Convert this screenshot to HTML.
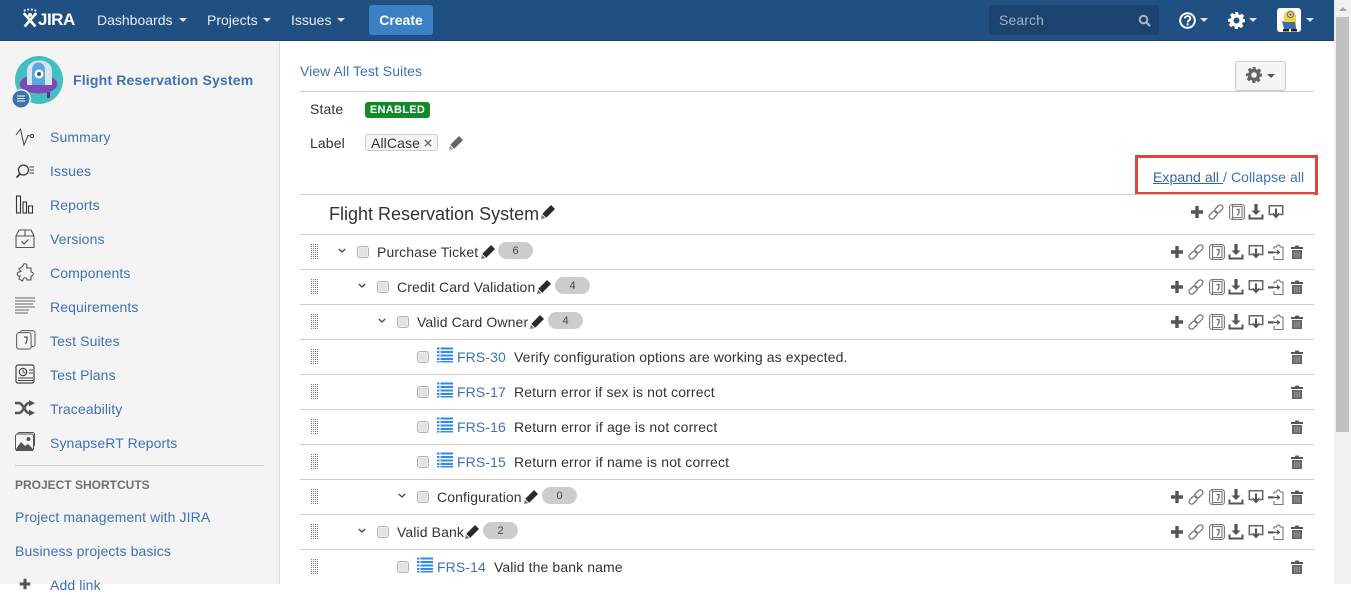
<!DOCTYPE html>
<html>
<head>
<meta charset="utf-8">
<style>
html,body{margin:0;padding:0;width:1351px;height:584px;overflow:hidden;background:#fff;font-family:"Liberation Sans",Arial,sans-serif;font-size:14px;color:#333;letter-spacing:.11px}
.a{position:absolute;white-space:nowrap;line-height:20px}
svg{position:absolute;overflow:visible}
.lnk{color:#3f72b2}
.nv{color:#e6edf5;letter-spacing:0}
.caret{position:absolute;width:0;height:0;border-left:4px solid transparent;border-right:4px solid transparent;border-top:4px solid #dbe4ee}
.hr{position:absolute;left:300px;width:1014px;height:1px;background:#ccc}
.drag{position:absolute;left:311px;width:7px;height:15px;background:repeating-linear-gradient(90deg,transparent 0 1px,#fff 1px 2px),repeating-linear-gradient(0deg,#777 0 1px,#fff 1px 2px)}
.cb{position:absolute;width:10px;height:10px;border:1px solid #b0b0b0;border-radius:3px;background:#e2e2e2;box-shadow:inset 0 0 0 1px #eee}
.bdg{position:absolute;width:35px;height:17px;border-radius:9px;background:#ccc;font-size:11px;line-height:19px;text-align:center;color:#444;letter-spacing:0}
.sb{color:#3f72b2}
</style>
</head>
<body>
<svg width="0" height="0" style="position:absolute">
<defs>
<symbol id="plus" viewBox="0 0 16 16"><path d="M6.300 2h3.400v4.300h4.300v3.400H9.700V14H6.300V9.700H2V6.300h4.300z" fill="#555"/></symbol>
<symbol id="link" viewBox="0 0 16 16"><g fill="none" stroke="#777" stroke-width="1.300"><rect x="8.200" y=".2" width="5.200" height="9.500" rx="2.600" transform="rotate(45 10.800 5)"/><rect x="2.600" y="6.300" width="5.200" height="9.500" rx="2.600" transform="rotate(45 5.200 11)"/></g></symbol>
<symbol id="suite" viewBox="0 0 16 16"><g fill="none" stroke="#777" stroke-width="1.100"><rect x=".6" y=".6" width="14.800" height="14.800" rx="2.500"/><path d="M3.500 1v14M3.500 2.500h9.500v11H3.500"/><path d="M7.500 5.500h2.500v3l-1.500 3" stroke="#666" stroke-width="1.300"/></g></symbol>
<symbol id="dl" viewBox="0 0 16 16"><path d="M6.400 0h3.200v6.500h3L8 11 3.400 6.500h3z" fill="#555"/><path d="M.5 10.500v5h15v-5h-2v3H2.500v-3z" fill="#555"/></symbol>
<symbol id="inb" viewBox="0 0 16 16"><path d="M4.500 10.500H1.300V1.800h13.400v8.700h-3.200" fill="none" stroke="#666" stroke-width="1.500"/><path d="M8 4.500v8.500M4.800 9.500L8 13l3.200-3.500" fill="none" stroke="#555" stroke-width="2"/></symbol>
<symbol id="ex" viewBox="0 0 16 16"><path d="M6 5V3h2.500l.7-1.800h2.400l.7 1.800h2.700v12.500H6v-3.500" fill="none" stroke="#777" stroke-width="1.100"/><path d="M0 7.300h5.500v2.200H0z" fill="#555"/><path d="M5.500 8.400H11M9 6.400l2.500 2-2.500 2" fill="none" stroke="#555" stroke-width="1.200"/></symbol>
<symbol id="trash" viewBox="0 0 16 16"><path d="M2 3h3.800l.7-1.500h3l.7 1.500H14v2H2z" fill="#555"/><path d="M3 6h10v9H3z" fill="#666"/><path d="M5.800 7.500v6M8 7.500v6M10.200 7.500v6" stroke="#aaa" stroke-width=".9"/></symbol>
<symbol id="pen" viewBox="0 0 16 16"><path d="M11.500 0L16 4.500 6 14.500 1.500 10z" fill="#2a2a2a"/><path d="M1 11l4 4-5 1z" fill="#777"/></symbol>
<symbol id="list" viewBox="0 0 16 16"><path d="M0 .5h2.500v2H0zM3.500.5H16v2H3.500zM0 4h2.500v2H0zM3.500 4H16v2H3.500zM0 7.500h2.500v2H0zM3.500 7.500H16v2H3.500zM0 11h2.500v2H0zM3.500 11H16v2H3.500zM0 14h2.500v1.500H0zM3.500 14H16v1.500H3.500z" fill="#2d8ceb"/></symbol>
<symbol id="chev" viewBox="0 0 8 6"><path d="M.8 1l3.200 3 3.200-3" fill="none" stroke="#444" stroke-width="1.300"/></symbol>
<symbol id="gear" viewBox="0 0 16 16"><path fill-rule="evenodd" d="M6.500 0h3l.4 2.200 1.300.6L13.100 1.500l2.100 2.100-1.300 1.900.6 1.300L16 6.500v3l-2.200.4-.6 1.300 1.300 1.900-2.100 2.100-1.900-1.300-1.300.6L9.500 16h-3l-.4-2.500-1.300-.6-1.900 1.300-2.100-2.100 1.300-1.900-.6-1.300L0 9.500v-3l2.500-.4.600-1.300L1.800 2.900 3.900.8l1.900 1.300 1.300-.6zM8 5.200a2.800 2.800 0 1 0 0 5.600 2.800 2.800 0 0 0 0-5.600z"/></symbol>
</defs>
</svg>

<!-- header -->
<div class="a" style="left:0;top:0;width:1334px;height:40px;background:#205081;border-bottom:1px solid #1a4069"></div>
<svg style="left:22px;top:8px" width="16" height="21" viewBox="0 0 18 22"><g fill="#fff"><circle cx="9" cy="7" r="2.200"/><circle cx="3" cy="2" r="1.200"/><circle cx="7" cy="1" r="1.200"/><circle cx="11" cy="1" r="1.200"/><circle cx="15" cy="2" r="1.200"/></g><path d="M2 5l7 8 7-8M9 13l-6 7M9 13l6 7" fill="none" stroke="#fff" stroke-width="3"/></svg>
<div class="a" style="left:38px;top:10px;color:#fff;font-weight:bold;font-size:17px;letter-spacing:-.5px">JIRA</div>
<div class="a nv" style="left:97px;top:10px">Dashboards</div><div class="caret" style="left:179px;top:18px"></div>
<div class="a nv" style="left:207px;top:10px">Projects</div><div class="caret" style="left:263px;top:18px"></div>
<div class="a nv" style="left:291px;top:10px">Issues</div><div class="caret" style="left:337px;top:18px"></div>
<div class="a" style="left:369px;top:5px;width:64px;height:30px;background:#3b7fc4;border-radius:3px;color:#fff;font-weight:bold;text-align:center;line-height:30px;letter-spacing:0">Create</div>
<div class="a" style="left:989px;top:5px;width:170px;height:30px;background:#1c4270;border-radius:3px"></div>
<div class="a" style="left:999px;top:10px;color:#9fb2c8">Search</div>
<svg style="left:1138px;top:14px" width="13" height="13" viewBox="0 0 13 13"><circle cx="5.500" cy="5.500" r="3.800" fill="none" stroke="#a7b6c7" stroke-width="2"/><path d="M8.500 8.500l3.500 3.500" stroke="#a7b6c7" stroke-width="2.200"/></svg>
<svg style="left:1179px;top:12px" width="17" height="17" viewBox="0 0 17 17"><circle cx="8.500" cy="8.500" r="7.300" fill="none" stroke="#fff" stroke-width="2"/><path d="M5.800 6.500c.2-3.300 5.600-3.200 5.500-.1 0 2-2.500 2-2.700 4" fill="none" stroke="#fff" stroke-width="1.900"/><rect x="7.600" y="11.300" width="2" height="2" fill="#fff"/></svg>
<div class="caret" style="left:1200px;top:18px"></div>
<svg style="left:1228px;top:12px;fill:#fff" width="17" height="17"><use href="#gear"/></svg>
<div class="caret" style="left:1249px;top:18px"></div>
<svg style="left:1277px;top:8px" width="24" height="24" viewBox="0 0 24 24"><rect width="24" height="24" rx="3" fill="#fff"/><path d="M7 9c0-9 12-9 12 0v11H7z" fill="#f3d33c"/><circle cx="13.500" cy="6.500" r="3" fill="#ddd" stroke="#666"/><circle cx="13.500" cy="6.500" r="1" fill="#432"/><path d="M5 13l3 1h10l1 7H7z" fill="#3d6ca6"/><path d="M6 21h6v2.500H6zM14 21h6v2.500h-6z" fill="#222"/></svg>
<div class="caret" style="left:1306px;top:18px"></div>

<!-- scrollbar -->
<div class="a" style="left:1334px;top:0;width:17px;height:584px;background:#f1f1f1"></div>
<div class="a" style="left:1336px;top:17px;width:13px;height:415px;background:#c1c1c1"></div>
<div class="a" style="left:1339px;top:7px;width:0;height:0;border-left:4px solid transparent;border-right:4px solid transparent;border-bottom:4px solid #a3a3a3"></div>

<!-- sidebar -->
<div class="a" style="left:0;top:41px;width:279px;height:543px;background:#f4f4f4;border-right:1px solid #ddd"></div>
<svg style="left:12px;top:55px" width="54" height="60" viewBox="0 0 54 60"><circle cx="27" cy="25" r="24" fill="#43bfbf"/><ellipse cx="26.500" cy="29" rx="19" ry="9.500" fill="#7d4bb5"/><path d="M15 30V16C15 2 40 2 40 16V30z" fill="#d8e4f2"/><path d="M20 30V15C20 5 33 5 33 15V30z" fill="#5aa8e0"/><circle cx="27" cy="19" r="4.500" fill="#fff"/><circle cx="27" cy="19" r="2" fill="#2e5c8c"/><path d="M35 37h3v6h-3z" fill="#5d3590"/><circle cx="9" cy="44" r="10" fill="#f4f4f4"/><circle cx="9" cy="44" r="8.500" fill="#3b73af"/><path d="M5 41h8M5 43.500h8M5 46h8" stroke="#fff" stroke-width="1.100"/></svg>
<div class="a" style="left:73px;top:70px;font-weight:bold;color:#3f72b2;letter-spacing:.18px">Flight Reservation System</div>

<div class="a sb" style="left:50px;top:127px">Summary</div>
<div class="a sb" style="left:50px;top:161px">Issues</div>
<div class="a sb" style="left:50px;top:195px">Reports</div>
<div class="a sb" style="left:50px;top:229px">Versions</div>
<div class="a sb" style="left:50px;top:263px">Components</div>
<div class="a sb" style="left:50px;top:297px">Requirements</div>
<div class="a sb" style="left:50px;top:331px">Test Suites</div>
<div class="a sb" style="left:50px;top:365px">Test Plans</div>
<div class="a sb" style="left:50px;top:399px">Traceability</div>
<div class="a sb" style="left:50px;top:433px">SynapseRT Reports</div>

<svg style="left:15px;top:127px" width="20" height="20" viewBox="0 0 20 20"><path d="M1 8L5.500 2 9 18l4-9.500 2 .5" fill="none" stroke="#444" stroke-width="1"/><circle cx="17" cy="9" r="1.500" fill="none" stroke="#444"/></svg>
<svg style="left:15px;top:161px" width="20" height="20" viewBox="0 0 20 20"><circle cx="8.500" cy="9" r="5" fill="none" stroke="#333" stroke-width="1.200"/><path d="M5 13l-3.500 3.500" stroke="#333" stroke-width="1.600"/><path d="M14.500 6H19M14.500 9H19M14.500 12H19" stroke="#444"/></svg>
<svg style="left:15px;top:195px" width="20" height="20" viewBox="0 0 20 20"><g fill="none" stroke="#333" stroke-width="1.100"><rect x="1.500" y="1" width="4" height="17"/><rect x="8" y="7" width="3.500" height="11"/><rect x="13.500" y="11" width="4" height="7"/></g></svg>
<svg style="left:15px;top:229px" width="20" height="20" viewBox="0 0 20 20"><g fill="none" stroke="#555" stroke-width="1.100"><path d="M1 7l3-6h12l3 6v11.500H1zM1 7h18M10 1v6"/><path d="M6.500 12.500l2.500 2.500 4.500-4.500" stroke="#444"/></g></svg>
<svg style="left:15px;top:263px" width="20" height="20" viewBox="0 0 20 20"><path d="M8 3c0-3 4-3 4 0l-.5 2H16v4c3 0 3 4 0 4v4h-4c0-3-4-3-4 0l-.5 1-3.500-2 1-3c-3 1-4-3-1-4l2-.5L4 6z" fill="none" stroke="#555" stroke-width="1.100"/></svg>
<svg style="left:15px;top:297px" width="20" height="20" viewBox="0 0 20 20"><path d="M0 1h20M0 4h20M0 7h18M0 10h20M0 13h14M0 16h13" stroke="#666" stroke-width="1"/></svg>
<svg style="left:16px;top:330px" width="20" height="20" viewBox="0 0 20 20"><g fill="none" stroke="#666" stroke-width="1.100"><rect x="4" y=".6" width="15" height="16" rx="2.500"/><rect x=".6" y="2.600" width="14.500" height="16.500" rx="2.500" fill="#f4f4f4"/><path d="M8 7h3v3.500l-1.500 3.500" stroke="#555" stroke-width="1.300"/></g></svg>
<svg style="left:15px;top:364px" width="20" height="20" viewBox="0 0 20 20"><rect x="1" y="1" width="18" height="18" rx="2" fill="none" stroke="#444" stroke-width="1.200"/><circle cx="8" cy="8" r="3.700" fill="none" stroke="#444" stroke-width="1.200"/><path d="M8 5.500V8l2 1M14 6h4M14 9h4M3 14h15M3 16.500h15" fill="none" stroke="#444"/></svg>
<svg style="left:15px;top:400px" width="20" height="16" viewBox="0 0 20 16"><path d="M0 3h4c4 0 6 10 10 10M0 13h4c4 0 6-10 10-10" fill="none" stroke="#555" stroke-width="2.500"/><path d="M14 0l6 3-6 3.500zM14 9.500l6 3.500-6 3z" fill="#555"/></svg>
<svg style="left:15px;top:432px" width="20" height="20" viewBox="0 0 20 20"><rect x="2.500" y=".5" width="17" height="14" rx="2" fill="none" stroke="#555"/><rect x=".5" y="2" width="18" height="16.500" rx="2" fill="#f4f4f4" stroke="#555"/><path d="M1 17l5-7 4 4 3-2 5 5v2H1z" fill="#555"/><circle cx="13.500" cy="7" r="2" fill="#555"/></svg>

<div class="a" style="left:15px;top:465px;width:249px;height:1px;background:#ccc"></div>
<div class="a" style="left:15px;top:475px;font-size:12px;font-weight:bold;color:#707070;letter-spacing:0">PROJECT SHORTCUTS</div>
<div class="a sb" style="left:15px;top:507px">Project management with JIRA</div>
<div class="a sb" style="left:15px;top:541px">Business projects basics</div>
<svg style="left:18px;top:577px" width="14" height="14"><use href="#plus" width="14" height="14"/></svg>
<div class="a sb" style="left:50px;top:575px">Add link</div>

<!-- content -->
<div class="a lnk" style="left:300px;top:61px;letter-spacing:.06px">View All Test Suites</div>
<div class="a" style="left:1235px;top:61px;width:49px;height:28px;background:#f5f5f5;border:1px solid #ccc;border-radius:3px"></div>
<svg style="left:1246px;top:67px;fill:#666" width="16" height="16"><use href="#gear"/></svg>
<div class="caret" style="left:1267px;top:74px;border-top-color:#555"></div>
<div class="hr" style="top:91px;width:1014px"></div>
<div class="a" style="left:310px;top:99px">State</div>
<div class="a" style="left:365px;top:102px;width:65px;height:16px;background:#14892c;border-radius:3px;color:#fff;font-size:11px;font-weight:bold;line-height:16px;text-align:center;letter-spacing:.3px">ENABLED</div>
<div class="a" style="left:310px;top:133px">Label</div>
<div class="a" style="left:365px;top:134px;width:71px;height:15px;border:1px solid #ccc;border-radius:3px;background:#f5f5f5"></div>
<div class="a" style="left:371px;top:133px">AllCase</div>
<svg style="left:424px;top:139px" width="8" height="8" viewBox="0 0 9 9"><path d="M1 1l7 7M8 1L1 8" stroke="#666" stroke-width="1.500"/></svg>
<svg style="left:449px;top:136px;opacity:.72" width="14" height="14"><use href="#pen" width="14" height="14"/></svg>

<div class="a" style="left:1135px;top:155px;width:177px;height:34px;border:3px solid #e5413e"></div>
<div class="a" style="left:1153px;top:167px;color:#3f72b2;letter-spacing:.07px"><span style="text-decoration:underline;color:#2f66a8">Expand all </span>/ Collapse all</div>

<div class="hr" style="top:194px"></div>
<div class="a" style="left:329px;top:204px;font-size:18px;letter-spacing:0">Flight Reservation System</div>
<svg style="left:541px;top:205px" width="14" height="14"><use href="#pen" width="14" height="14"/></svg>
<svg style="left:1189px;top:204px" width="16" height="16"><use href="#plus"/></svg>
<svg style="left:1208px;top:204px" width="16" height="16"><use href="#link"/></svg>
<svg style="left:1229px;top:204px" width="16" height="16"><use href="#suite"/></svg>
<svg style="left:1248px;top:204px" width="16" height="16"><use href="#dl"/></svg>
<svg style="left:1268px;top:204px" width="16" height="16"><use href="#inb"/></svg>
<div class="hr" style="top:234px"></div>

<!-- row lines -->
<div class="hr" style="top:269px"></div>
<div class="hr" style="top:304px"></div>
<div class="hr" style="top:339px"></div>
<div class="hr" style="top:374px"></div>
<div class="hr" style="top:409px"></div>
<div class="hr" style="top:444px"></div>
<div class="hr" style="top:479px"></div>
<div class="hr" style="top:514px"></div>
<div class="hr" style="top:549px"></div>

<!-- drag handles -->
<div class="drag" style="top:244px"></div>
<div class="drag" style="top:279px"></div>
<div class="drag" style="top:314px"></div>
<div class="drag" style="top:349px"></div>
<div class="drag" style="top:384px"></div>
<div class="drag" style="top:419px"></div>
<div class="drag" style="top:454px"></div>
<div class="drag" style="top:489px"></div>
<div class="drag" style="top:524px"></div>
<div class="drag" style="top:559px"></div>

<!-- row 1 -->
<svg style="left:338px;top:248px" width="8" height="6"><use href="#chev"/></svg>
<div class="cb" style="left:357px;top:246px"></div>
<div class="a" style="left:377px;top:242px">Purchase Ticket</div>
<svg style="left:481px;top:245px" width="14" height="14"><use href="#pen" width="14" height="14"/></svg>
<div class="bdg" style="left:498px;top:242px">6</div>
<!-- row 2 -->
<svg style="left:358px;top:283px" width="8" height="6"><use href="#chev"/></svg>
<div class="cb" style="left:377px;top:281px"></div>
<div class="a" style="left:397px;top:277px">Credit Card Validation</div>
<svg style="left:537px;top:280px" width="14" height="14"><use href="#pen" width="14" height="14"/></svg>
<div class="bdg" style="left:555px;top:277px">4</div>
<!-- row 3 -->
<svg style="left:378px;top:318px" width="8" height="6"><use href="#chev"/></svg>
<div class="cb" style="left:397px;top:316px"></div>
<div class="a" style="left:417px;top:312px">Valid Card Owner</div>
<svg style="left:530px;top:315px" width="14" height="14"><use href="#pen" width="14" height="14"/></svg>
<div class="bdg" style="left:548px;top:312px">4</div>
<!-- FRS rows -->
<div class="cb" style="left:417px;top:351px"></div>
<svg style="left:437px;top:347px" width="16" height="16"><use href="#list"/></svg>
<div class="a lnk" style="left:457px;top:347px">FRS-30</div>
<div class="a" style="left:514px;top:347px">Verify configuration options are working as expected.</div>
<div class="cb" style="left:417px;top:386px"></div>
<svg style="left:437px;top:382px" width="16" height="16"><use href="#list"/></svg>
<div class="a lnk" style="left:457px;top:382px">FRS-17</div>
<div class="a" style="left:514px;top:382px;letter-spacing:.14px">Return error if sex is not correct</div>
<div class="cb" style="left:417px;top:421px"></div>
<svg style="left:437px;top:417px" width="16" height="16"><use href="#list"/></svg>
<div class="a lnk" style="left:457px;top:417px">FRS-16</div>
<div class="a" style="left:514px;top:417px;letter-spacing:.17px">Return error if age is not correct</div>
<div class="cb" style="left:417px;top:456px"></div>
<svg style="left:437px;top:452px" width="16" height="16"><use href="#list"/></svg>
<div class="a lnk" style="left:457px;top:452px">FRS-15</div>
<div class="a" style="left:514px;top:452px;letter-spacing:.17px">Return error if name is not correct</div>
<!-- Configuration -->
<svg style="left:398px;top:493px" width="8" height="6"><use href="#chev"/></svg>
<div class="cb" style="left:417px;top:491px"></div>
<div class="a" style="left:437px;top:487px">Configuration</div>
<svg style="left:524px;top:490px" width="14" height="14"><use href="#pen" width="14" height="14"/></svg>
<div class="bdg" style="left:542px;top:487px">0</div>
<!-- Valid Bank -->
<svg style="left:358px;top:528px" width="8" height="6"><use href="#chev"/></svg>
<div class="cb" style="left:377px;top:526px"></div>
<div class="a" style="left:397px;top:522px">Valid Bank</div>
<svg style="left:465px;top:525px" width="14" height="14"><use href="#pen" width="14" height="14"/></svg>
<div class="bdg" style="left:483px;top:522px">2</div>
<!-- FRS-14 -->
<div class="cb" style="left:397px;top:561px"></div>
<svg style="left:417px;top:557px" width="16" height="16"><use href="#list"/></svg>
<div class="a lnk" style="left:437px;top:557px">FRS-14</div>
<div class="a" style="left:494px;top:557px">Valid the bank name</div>

<!-- action icons rows -->
<svg style="left:1169px;top:244px" width="16" height="16"><use href="#plus"/></svg>
<svg style="left:1188px;top:244px" width="16" height="16"><use href="#link"/></svg>
<svg style="left:1209px;top:244px" width="16" height="16"><use href="#suite"/></svg>
<svg style="left:1228px;top:244px" width="16" height="16"><use href="#dl"/></svg>
<svg style="left:1248px;top:244px" width="16" height="16"><use href="#inb"/></svg>
<svg style="left:1268px;top:244px" width="16" height="16"><use href="#ex"/></svg>
<svg style="left:1289px;top:244px" width="16" height="16"><use href="#trash"/></svg>

<svg style="left:1169px;top:279px" width="16" height="16"><use href="#plus"/></svg>
<svg style="left:1188px;top:279px" width="16" height="16"><use href="#link"/></svg>
<svg style="left:1209px;top:279px" width="16" height="16"><use href="#suite"/></svg>
<svg style="left:1228px;top:279px" width="16" height="16"><use href="#dl"/></svg>
<svg style="left:1248px;top:279px" width="16" height="16"><use href="#inb"/></svg>
<svg style="left:1268px;top:279px" width="16" height="16"><use href="#ex"/></svg>
<svg style="left:1289px;top:279px" width="16" height="16"><use href="#trash"/></svg>

<svg style="left:1169px;top:314px" width="16" height="16"><use href="#plus"/></svg>
<svg style="left:1188px;top:314px" width="16" height="16"><use href="#link"/></svg>
<svg style="left:1209px;top:314px" width="16" height="16"><use href="#suite"/></svg>
<svg style="left:1228px;top:314px" width="16" height="16"><use href="#dl"/></svg>
<svg style="left:1248px;top:314px" width="16" height="16"><use href="#inb"/></svg>
<svg style="left:1268px;top:314px" width="16" height="16"><use href="#ex"/></svg>
<svg style="left:1289px;top:314px" width="16" height="16"><use href="#trash"/></svg>

<svg style="left:1289px;top:349px" width="16" height="16"><use href="#trash"/></svg>
<svg style="left:1289px;top:384px" width="16" height="16"><use href="#trash"/></svg>
<svg style="left:1289px;top:419px" width="16" height="16"><use href="#trash"/></svg>
<svg style="left:1289px;top:454px" width="16" height="16"><use href="#trash"/></svg>

<svg style="left:1169px;top:489px" width="16" height="16"><use href="#plus"/></svg>
<svg style="left:1188px;top:489px" width="16" height="16"><use href="#link"/></svg>
<svg style="left:1209px;top:489px" width="16" height="16"><use href="#suite"/></svg>
<svg style="left:1228px;top:489px" width="16" height="16"><use href="#dl"/></svg>
<svg style="left:1248px;top:489px" width="16" height="16"><use href="#inb"/></svg>
<svg style="left:1268px;top:489px" width="16" height="16"><use href="#ex"/></svg>
<svg style="left:1289px;top:489px" width="16" height="16"><use href="#trash"/></svg>

<svg style="left:1169px;top:524px" width="16" height="16"><use href="#plus"/></svg>
<svg style="left:1188px;top:524px" width="16" height="16"><use href="#link"/></svg>
<svg style="left:1209px;top:524px" width="16" height="16"><use href="#suite"/></svg>
<svg style="left:1228px;top:524px" width="16" height="16"><use href="#dl"/></svg>
<svg style="left:1248px;top:524px" width="16" height="16"><use href="#inb"/></svg>
<svg style="left:1268px;top:524px" width="16" height="16"><use href="#ex"/></svg>
<svg style="left:1289px;top:524px" width="16" height="16"><use href="#trash"/></svg>

<svg style="left:1289px;top:559px" width="16" height="16"><use href="#trash"/></svg>
</body>
</html>
